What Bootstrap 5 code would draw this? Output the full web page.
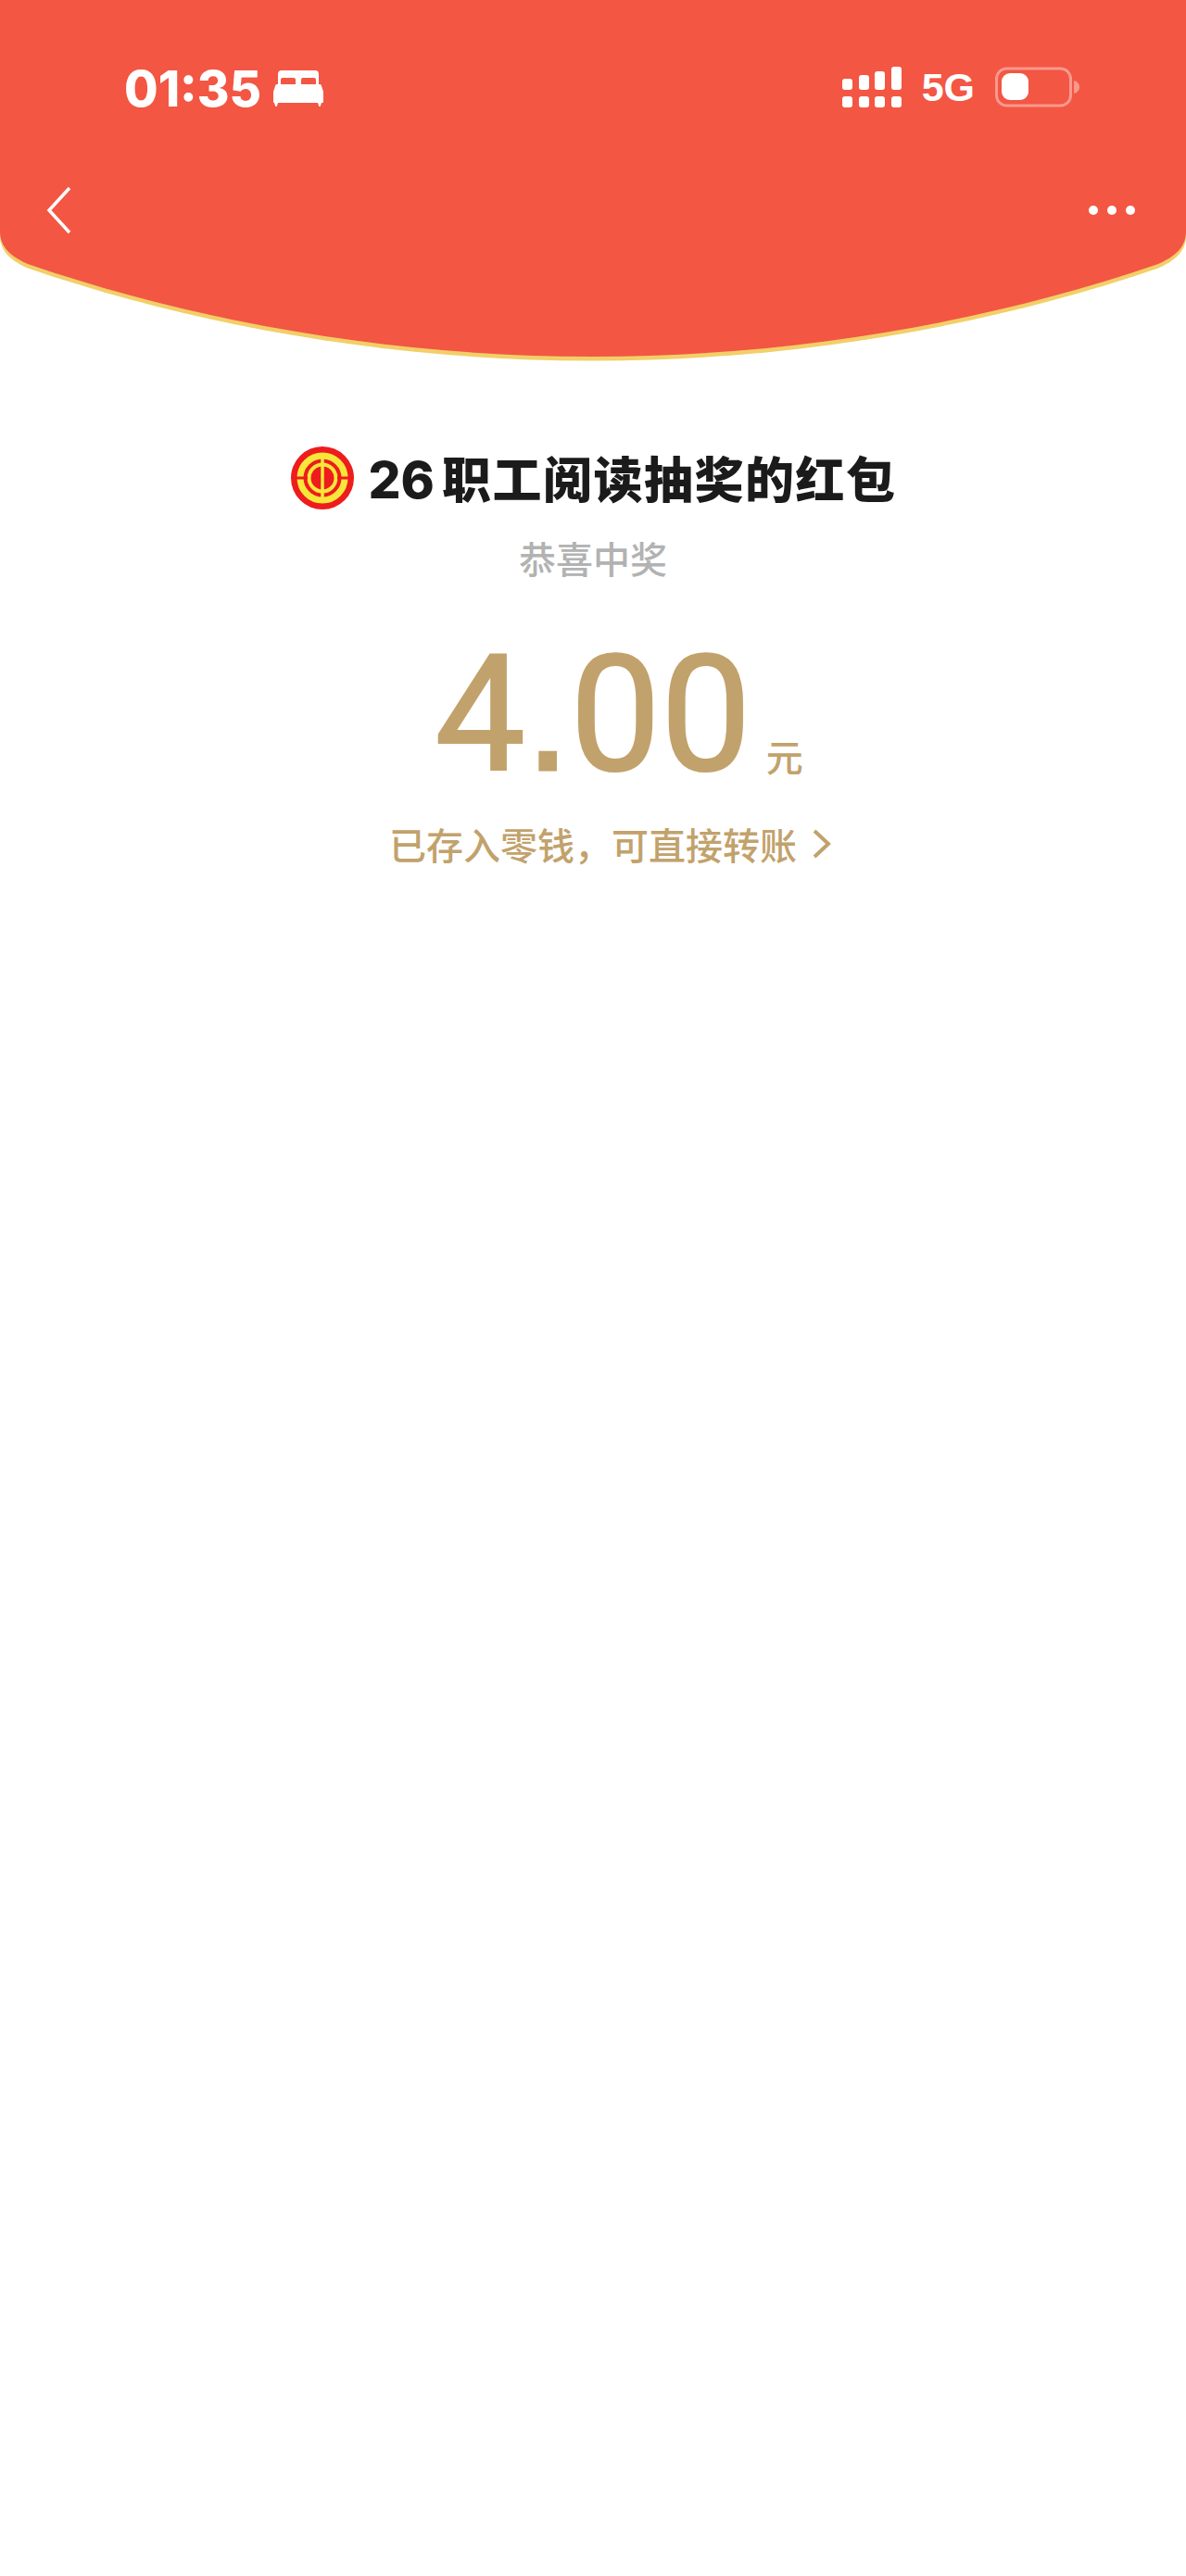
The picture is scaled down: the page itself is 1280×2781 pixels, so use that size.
<!DOCTYPE html>
<html lang="zh-CN">
  <head>
    <meta charset="UTF-8" />
    <meta name="viewport" content="width=device-width, initial-scale=1.0" />
    <title>红包详情</title>
    <link href="https://cdn.jsdelivr.net/npm/bootstrap@5.3.0/dist/css/bootstrap.min.css" rel="stylesheet" />
    <style>
      body { font-family: "Liberation Sans", "Noto Sans CJK SC", sans-serif; background: #fff; min-height: 2781px; }
      .hb-head { height: 390px; }
      .hb-curve { position: absolute; left: 0; top: 0; width: 1280px; height: 390px; }
      .hb-status { height: 197px; padding: 70px 114px 0 134px; }
      .hb-clock { gap: 12px; }
      .hb-time { font-family: Inter, "Liberation Sans", sans-serif; font-size: 53px; font-weight: 800; line-height: 52px; color: #fff; }
      .hb-signal { gap: 22px; }
      .hb-net { font-size: 43px; font-weight: 700; line-height: 48px; color: #fff; }
      .hb-nav { padding: 0 54px 0 50px; height: 60px; }
      .hb-title { margin-top: 91px; height: 70px; gap: 15px; }
      .hb-name { font-family: "Noto Sans CJK SC", sans-serif; font-size: 53px; font-weight: 900; line-height: 70px; letter-spacing: 1.5px; color: #1b1b1b; }
      .hb-digits { font-family: Inter, "Liberation Sans", sans-serif; font-size: 55px; font-weight: 800; letter-spacing: 0; margin-right: 8px; }
      .hb-sub { font-family: "Noto Sans CJK SC", sans-serif; font-size: 40px; font-weight: 500; line-height: 56px; color: #b2b2b2; margin-top: 23px; }
      .hb-amount { color: #c2a26c; margin-top: 54px; height: 176px; padding-left: 56px; }
      .hb-num { font-family: Roboto, "Liberation Sans", sans-serif; font-size: 174px; font-weight: 400; line-height: 176px; -webkit-text-stroke: 2px #c2a26c; }
      .hb-dot { font-family: "Liberation Sans", sans-serif; -webkit-text-stroke: 3px #c2a26c; }
      .hb-unit { font-family: "Noto Sans CJK SC", sans-serif; font-size: 40px; font-weight: 500; line-height: 40px; margin-left: 16px; margin-bottom: 24px; }
      .hb-link { font-family: "Noto Sans CJK SC", sans-serif; color: #c2a26c; font-size: 40px; font-weight: 500; line-height: 56px; margin-top: 23px; padding-left: 38px; gap: 16px; }
    </style>
  </head>
  <body class="m-0">
    <div class="hb-head position-relative">
      <svg class="hb-curve" viewBox="0 0 1280 390" aria-hidden="true">
        <path d="M0 0H1280V250C1280 268 1266 278 1250 285C1060 350 850 385 640 385C430 385 220 350 30 285C14 278 0 268 0 250Z" fill="#f2cf68" transform="translate(0 4.5)" />
        <path d="M0 0H1280V250C1280 268 1266 278 1250 285C1060 350 850 385 640 385C430 385 220 350 30 285C14 278 0 268 0 250Z" fill="#f35643" />
      </svg>
      <div class="hb-status position-relative d-flex justify-content-between align-items-start">
        <div class="hb-clock d-flex align-items-center">
          <span class="hb-time">01:35</span>
          <svg width="56" height="40" viewBox="0 0 56 40" aria-hidden="true">
            <path fill="#fff" d="M6 4a4 4 0 0 1 4-4h36a4 4 0 0 1 4 4v11h-3V10a2 2 0 0 0-2-2H33a2 2 0 0 0-2 2v5h-6v-5a2 2 0 0 0-2-2H11a2 2 0 0 0-2 2v5H6Z" />
            <path fill="#fff" d="M3 17a2 2 0 0 1 2-2h46a2 2 0 0 1 2 2l2 6v11a1 1 0 0 1-1 1h-1l-1 3a1 1 0 0 1-2 0l-1-3H6l-1 3a1 1 0 0 1-2 0l-1-3a1 1 0 0 1-1-1V23Z" />
          </svg>
        </div>
        <div class="hb-signal d-flex align-items-center">
          <svg width="64" height="44" viewBox="0 0 64 44" aria-hidden="true">
            <g fill="#fff">
              <rect x="0" y="13" width="11" height="12" rx="3" /><rect x="18" y="9" width="11" height="16" rx="3" /><rect x="35" y="5" width="11" height="20" rx="3" /><rect x="53" y="0" width="11" height="25" rx="3" />
              <rect x="0" y="32" width="11" height="12" rx="3" /><rect x="18" y="32" width="11" height="12" rx="3" /><rect x="35" y="32" width="11" height="12" rx="3" /><rect x="53" y="32" width="11" height="12" rx="3" />
            </g>
          </svg>
          <span class="hb-net">5G</span>
          <svg width="92" height="44" viewBox="0 0 92 44" aria-hidden="true">
            <rect x="1.5" y="2" width="80" height="40" rx="11" fill="none" stroke="#fff" stroke-opacity=".4" stroke-width="3" />
            <rect x="7" y="7" width="29" height="29" rx="9" fill="#fff" />
            <path d="M85 15c4 1 6 4 6 7s-2 6-6 7Z" fill="#fff" fill-opacity=".4" />
          </svg>
        </div>
      </div>
      <div class="hb-nav position-relative d-flex justify-content-between align-items-center">
        <svg width="28" height="54" viewBox="0 0 28 54" aria-hidden="true">
          <path d="M25 3 3 27l22 24" fill="none" stroke="#fff" stroke-width="3.5" />
        </svg>
        <svg width="52" height="12" viewBox="0 0 52 12" aria-hidden="true">
          <g fill="#fff"><circle cx="6" cy="6" r="5" /><circle cx="26" cy="6" r="5" /><circle cx="46" cy="6" r="5" /></g>
        </svg>
      </div>
    </div>
    <div class="text-center">
      <div class="hb-title d-flex justify-content-center align-items-center">
        <svg width="70" height="70" viewBox="0 0 70 70" aria-hidden="true">
          <circle cx="35" cy="35" r="34" fill="#ee1c1c" />
          <circle cx="35" cy="35" r="24" fill="none" stroke="#f6e73a" stroke-width="7" />
          <circle cx="35" cy="35" r="14.5" fill="none" stroke="#f6e73a" stroke-width="4" />
          <path d="M35 10v50" stroke="#f6e73a" stroke-width="3.5" />
          <path d="M3 35h16M51 35h16" stroke="#ee1c1c" stroke-width="3" />
        </svg>
        <span class="hb-name"><span class="hb-digits">26</span>职工阅读抽奖的红包</span>
      </div>
      <div class="hb-sub">恭喜中奖</div>
      <div class="hb-amount d-flex justify-content-center align-items-end">
        <span class="hb-num">4<span class="hb-dot">.</span>00</span>
        <span class="hb-unit">元</span>
      </div>
      <div class="hb-link d-flex justify-content-center align-items-center">
        <span>已存入零钱，可直接转账</span>
        <svg width="22" height="34" viewBox="0 0 22 34" aria-hidden="true">
          <path d="M3 3l15 14L3 31" fill="none" stroke="#c2a26c" stroke-width="4" />
        </svg>
      </div>
    </div>
    <script src="https://cdn.jsdelivr.net/npm/bootstrap@5.3.0/dist/js/bootstrap.bundle.min.js"></script>
  </body>
</html>
